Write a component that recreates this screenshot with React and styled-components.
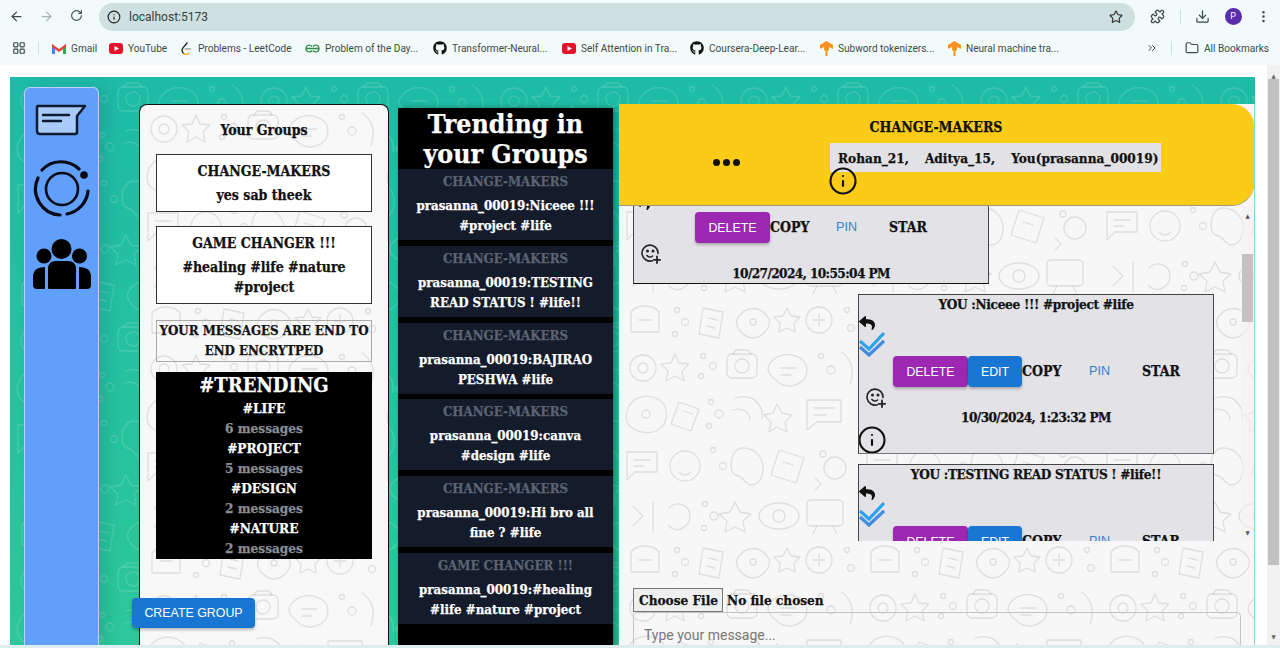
import styled, { createGlobalStyle } from "styled-components";
import {
  ArrowLeft,
  ArrowRight,
  RotateCw,
  Info,
  Star,
  Puzzle,
  Download,
  EllipsisVertical,
  LayoutGrid,
  Folder,
  ChevronsRight,
} from "lucide-react";
import { FaReply, FaGithub } from "react-icons/fa";

const doodle = (stroke) => {
  const svg = `<svg xmlns='http://www.w3.org/2000/svg' width='240' height='240' fill='none' stroke='${stroke}' stroke-width='1.3' stroke-linecap='round' stroke-linejoin='round'>
<circle cx='24' cy='24' r='13'/><circle cx='24' cy='24' r='5'/><path d='M56 10l4 9 10 1-7 7 2 10-9-5-9 5 2-10-7-7 10-1z'/>
<circle cx='84' cy='12' r='2.500'/><circle cx='94' cy='22' r='3.500'/><circle cx='82' cy='32' r='2.500'/>
<rect x='108' y='10' width='30' height='24' rx='5'/><circle cx='123' cy='22' r='7'/><path d='M114 10l3-4h12l3 4'/>
<path d='M154 16c12-10 34-5 34 10s-19 20-29 12-14-14-5-22z'/><path d='M162 24h15M162 31h10'/>
<circle cx='202' cy='12' r='2.500'/><circle cx='212' cy='26' r='4'/><path d='M222 8c10 6 14 18 9 32'/>
<path d='M10 62c8-15 34-12 37 4s-10 25-24 22-20-12-13-26z'/><circle cx='27' cy='70' r='4'/>
<path d='M60 58l20 7-8 22-20-7zM65 67l9 3'/><circle cx='92' cy='58' r='2.500'/><circle cx='100' cy='70' r='4'/><circle cx='90' cy='82' r='2.500'/>
<path d='M116 54c16-5 29 5 27 21M114 66c9-3 17 2 17 10'/><path d='M158 60l5 9 10 2-7 7 2 10-10-5-8 5 2-10-7-7 9-2z'/>
<path d='M188 56h34v22h-24l-10 8z'/><path d='M195 64h20M195 71h12'/>
<path d='M8 108h30v20H16l-8 8z'/><path d='M15 116h16M15 122h10'/>
<circle cx='66' cy='122' r='15'/><path d='M60 118h.1M72 118h.1M60 128c4 4 8 4 12 0'/><circle cx='94' cy='106' r='2.500'/><circle cx='104' cy='122' r='3.500'/>
<path d='M124 104c12 0 20 9 20 20s-5 17-12 17-7-9-15-10-7-27 7-27z'/><path d='M160 106l25 8-8 25-25-8z'/><path d='M164 118l10 3'/>
<circle cx='204' cy='110' r='3'/><circle cx='216' cy='124' r='11'/><path d='M210 122h.1M222 122h.1'/><path d='M196 134l6 6-6 6'/>
<path d='M14 162l10 10-10 10M34 158v30M50 164c8-8 21-3 21 8s-13 18-21 10'/><circle cx='86' cy='160' r='2.500'/><circle cx='95' cy='172' r='4'/><circle cx='85' cy='184' r='2.500'/>
<path d='M116 158l5 10 11 2-8 7 2 11-10-5-10 5 2-11-8-7 11-2z'/><ellipse cx='160' cy='172' rx='20' ry='13'/><circle cx='160' cy='172' r='6'/>
<path d='M192 156h28a4 4 0 0 1 4 4v18a4 4 0 0 1-4 4h-28a4 4 0 0 1-4-4v-18a4 4 0 0 1 4-4z'/><path d='M198 182l-4 8M214 182l4 8'/>
<path d='M12 208c6-8 22-8 28 0v20H12z'/><path d='M20 216h12'/><circle cx='58' cy='206' r='2.500'/><circle cx='66' cy='218' r='3.500'/><circle cx='56' cy='230' r='2.500'/>
<path d='M84 204l20 4-4 26-20-4zM90 214l8 2M88 222l8 2'/><path d='M120 212c8-10 20-10 28 0s-6 22-14 22-22-12-14-22z'/><circle cx='134' cy='218' r='3'/>
<path d='M168 204l4 8 9 1-6 6 1 9-8-4-8 4 1-9-6-6 9-1z'/><circle cx='200' cy='216' r='13'/><path d='M194 216h12M200 210v12'/><circle cx='228' cy='206' r='2.500'/><circle cx='232' cy='224' r='3.500'/>
</svg>`;
  return `url("data:image/svg+xml,${encodeURIComponent(svg.replace(/\n/g, ""))}")`;
};

const slab = `"DejaVu Serif Condensed", "DejaVu Serif", serif`;

const GlobalStyle = createGlobalStyle`
  html, body {
    margin: 0;
    padding: 0;
    height: 648px;
    overflow: hidden;
    background: #fff;
  }
  * {
    box-sizing: border-box;
  }
`;

const Window = styled.div`
  width: 1280px;
  height: 648px;
  display: flex;
  flex-direction: column;
  overflow: hidden;
  font-family: ${slab};
  font-weight: 700;
  -webkit-text-stroke: 0.25px currentColor;
`;

const Toolbar = styled.div`
  height: 33px;
  flex: none;
  display: flex;
  align-items: center;
  background: #f2fbf9;
  color: #3c4a4a;
  -webkit-text-stroke: 0;
`;

const NavButton = styled.div`
  width: 30px;
  display: flex;
  justify-content: center;
  color: ${(p) => (p.$off ? "#a9b5b5" : "#3c4a4a")};
`;

const NavGroup = styled.div`
  display: flex;
  width: 99px;
  padding-left: 1px;
`;

const Omnibox = styled.div`
  width: 1036px;
  height: 28px;
  border-radius: 14px;
  background: #cfe0e0;
  display: flex;
  align-items: center;
  padding: 0 12px 0 8px;
  gap: 8px;
  font: 400 12px "Roboto", sans-serif;
  color: #333f3f;
`;

const Address = styled.span`
  flex: 1;
`;

const ToolIcons = styled.div`
  flex: 1;
  display: flex;
  align-items: center;
  justify-content: space-between;
  padding: 0 9px 0 15px;
`;

const Divider = styled.span`
  width: 1px;
  height: 14px;
  flex: none;
  background: #bfe6e6;
  margin: ${(p) => p.$margin || 0};
`;

const Avatar = styled.span`
  width: 17px;
  height: 17px;
  border-radius: 50%;
  background: #5a2db0;
  color: #fff;
  font: 400 9px/17px "Roboto", sans-serif;
  text-align: center;
`;

const BookmarkBar = styled.div`
  height: 32px;
  flex: none;
  display: flex;
  align-items: center;
  background: #f2fbf9;
  padding: 0 11px 2px 12px;
  font: 400 10.1px "Roboto", sans-serif;
  color: #3f4a4a;
  -webkit-text-stroke: 0;
`;

const Bookmark = styled.span`
  display: flex;
  flex: none;
  align-items: center;
  gap: 5px;
  white-space: nowrap;
  width: ${(p) => (p.$w ? `${p.$w}px` : "auto")};
  svg {
    flex: none;
  }
`;

const BarSpacer = styled.span`
  flex: 1;
`;

const Page = styled.div`
  flex: 1;
  min-height: 0;
  display: flex;
  padding-top: 12px;
  background: #fff;
`;

const Stage = styled.main`
  width: 1245px;
  margin-left: 10px;
  height: 568px;
  background-color: #22bfa0;
  background-image: ${doodle("rgba(255,255,255,0.15)")},
    linear-gradient(#1ebba6, #2cc79a);
  display: flex;
  align-items: flex-start;
  padding-left: 14px;
  position: relative;
`;

const Rail = styled.nav`
  width: 75px;
  height: 558px;
  margin-top: 10px;
  flex: none;
  background: #60a0fb;
  border: 1px solid #b9d4fb;
  border-bottom: 0;
  border-radius: 6px 6px 0 0;
  display: flex;
  flex-direction: column;
  align-items: center;
  box-shadow: 8px 0 14px rgba(0, 60, 80, 0.14);
`;

const RailIcon = styled.div`
  display: flex;
  margin-top: ${(p) => p.$top}px;
`;

const GroupsPanel = styled.aside`
  width: 250px;
  height: 541px;
  margin: 27px 0 0 40px;
  flex: none;
  background-color: #f8f8f8;
  background-image: ${doodle("rgba(120,120,120,0.2)")};
  border: 1px solid #111;
  border-bottom: 0;
  border-radius: 8px 8px 0 0;
  padding: 0 16px;
  display: flex;
  flex-direction: column;
  color: #111;
`;

const PanelTitle = styled.h2`
  margin: 16px 0 15px;
  font-size: 14px;
  line-height: 18px;
  text-align: center;
`;

const GroupCard = styled.div`
  background: #fff;
  border: 1px solid #333;
  padding: 6px 4px;
  margin-bottom: 14px;
  text-align: center;
  font-size: 14px;
  line-height: 20px;
`;

const GroupName = styled.div`
  margin-bottom: 4px;
`;

const EncryptNote = styled.div`
  border: 1px solid #aaa;
  margin: 2px 0 10px;
  text-align: center;
  font-size: 13.2px;
  line-height: 20px;
`;

const TrendBox = styled.section`
  background: #000;
  height: 187px;
  flex: none;
  text-align: center;
  color: #fff;
  overflow: hidden;
`;

const TrendTitle = styled.div`
  font-size: 20px;
  line-height: 26px;
`;

const TrendTag = styled.div`
  font-size: 13.5px;
  line-height: 20px;
  color: ${(p) => (p.$muted ? "#8a8d93" : "#fff")};
`;

const MuiButton = styled.button`
  border: 0;
  border-radius: 4px;
  height: 31px;
  width: ${(p) => p.$w}px;
  flex: none;
  padding: 0;
  font: 400 12.4px "Liberation Sans", sans-serif;
  -webkit-text-stroke: 0;
  color: #fff;
  background: ${(p) => p.$bg || "#1976d2"};
  box-shadow: 0 2px 3px rgba(0, 0, 0, 0.25);
  white-space: nowrap;
`;

const CreateButton = styled(MuiButton)`
  height: 30px;
  margin: 39px 0 0 -24px;
`;

const TrendColumn = styled.section`
  width: 215px;
  height: 540px;
  margin: 31px 0 0 9px;
  flex: none;
  background: #000;
  color: #fff;
  box-shadow: 3px 0 6px rgba(0, 0, 0, 0.35);
  overflow: hidden;
`;

const ColumnTitle = styled.h1`
  margin: 0;
  height: 61px;
  padding: 1px 20px 0;
  font-size: 26.5px;
  line-height: 30px;
  text-align: center;
`;

const TrendCard = styled.article`
  background: #141b2b;
  height: 71px;
  margin-bottom: 5.8px;
  padding: 0 14px;
  text-align: center;
  font-size: 13.2px;
  line-height: 20px;
`;

const CardGroup = styled.div`
  color: #5b6372;
  line-height: 26px;
  margin-bottom: 1px;
`;

const ChatColumn = styled.section`
  width: 636px;
  height: 541px;
  margin: 27px 0 0 6px;
  flex: none;
  display: flex;
  flex-direction: column;
  background-color: #f7f7f7;
  background-image: ${doodle("rgba(120,120,120,0.2)")};
  border-right: 1px solid #7fe0b8;
`;

const ChatHeader = styled.header`
  height: 102px;
  flex: none;
  background: #fbcc17;
  border-radius: 0 22px 22px 0;
  border-bottom: 1px solid #9a9a80;
  display: flex;
  color: #111;
  position: relative;
  z-index: 1;
`;

const HeaderDots = styled.div`
  width: 211px;
  padding: 55px 0 0 94px;
  display: flex;
  gap: 3px;
`;

const Dot = styled.span`
  width: 7px;
  height: 7px;
  border-radius: 50%;
  background: #111;
`;

const HeaderInfo = styled.div`
  display: flex;
  flex-direction: column;
  align-items: flex-start;
`;

const HeaderName = styled.div`
  width: 212px;
  margin-top: 14px;
  height: 25px;
  font-size: 14px;
  line-height: 18px;
  text-align: center;
`;

const MemberList = styled.div`
  display: flex;
  gap: 16px;
  height: 29px;
  align-items: center;
  padding: 0 8px;
  width: 331px;
  background: #e2e2e6;
  font-size: 13.5px;
`;

const HeaderInfoIcon = styled(Info)`
  flex: none;
  margin: -6px 0 0 -2px;
`;

const MessageArea = styled.div`
  height: 335px;
  flex: none;
  position: relative;
  overflow: hidden;
`;

const MessageTrack = styled.div`
  margin-top: -82px;
  padding: 0 40px 0 14px;
  display: flex;
  flex-direction: column;
  gap: 10px;
`;

const Bubble = styled.div`
  width: 356px;
  flex: none;
  height: 160px;
  align-self: ${(p) => (p.$mine ? "flex-end" : "flex-start")};
  background: #e2e2e7;
  border: 1px solid #444;
  border-bottom-color: ${(p) => (p.$mine ? "#777" : "#111")};
  color: #111;
  font-size: 13.5px;
  display: flex;
  flex-direction: column;
  overflow: hidden;
`;

const BubbleText = styled.div`
  text-align: center;
  line-height: 18px;
  letter-spacing: -0.3px;
  flex: none;
  height: ${(p) => p.$h}px;
`;

const IconStack = styled.div`
  display: flex;
  flex-direction: column;
  flex: none;
  height: ${(p) => p.$h}px;
  padding-top: 2px;
  svg {
    flex: none;
  }
`;

const ActionRow = styled.div`
  display: flex;
  align-items: center;
  height: 31px;
  flex: none;
  padding-left: ${(p) => (p.$mine ? 34 : 61)}px;
  position: relative;
`;

const ActionLabel = styled.span`
  width: ${(p) => p.$w}px;
  padding-bottom: 2px;
  font-size: 14px;
`;

const PinLabel = styled.span`
  width: 53px;
  padding-bottom: 1px;
  font: 400 12.6px "Liberation Sans", sans-serif;
  -webkit-text-stroke: 0;
  color: #3a80cc;
`;

const ReactRow = styled.div`
  display: flex;
  height: 21px;
  flex: none;
  align-items: center;
  padding-left: 7px;
`;

const Stamp = styled.div`
  text-align: center;
  line-height: 18px;
  letter-spacing: -0.6px;
  flex: none;
`;

const BubbleInfo = styled(Info)`
  flex: none;
  margin: -1px 0 0 -2px;
`;

const ScrollTrack = styled.div`
  position: absolute;
  top: 0;
  right: 0;
  bottom: 0;
  width: 13px;
  background: rgba(241, 241, 241, 0.6);
  display: flex;
  flex-direction: column;
  align-items: center;
  justify-content: space-between;
  padding: 7px 0 5px;
  color: #555;
  font-size: 6px;
  line-height: 6px;
  -webkit-text-stroke: 0;
`;

const ScrollThumb = styled.div`
  position: absolute;
  top: 48px;
  left: 1px;
  width: 11px;
  height: 68px;
  background: #c2c2c2;
`;

const Composer = styled.form`
  padding: 47px 14px 0;
  flex: 1;
  min-height: 0;
  overflow: hidden;
`;

const FileRow = styled.div`
  display: flex;
  align-items: center;
  gap: 4px;
  color: #111;
  font-size: 13.5px;
`;

const FileButton = styled.span`
  height: 24px;
  line-height: 22px;
  padding: 0 4px 0 5px;
  border: 1px solid #777;
  background: #efefef;
`;

const MessageInput = styled.div`
  width: 608px;
  height: 40px;
  border: 1px solid #c4c4c4;
  border-radius: 4px 4px 0 0;
  padding: 14px 10px 0;
  font: 400 14px "Roboto", sans-serif;
  -webkit-text-stroke: 0;
  color: #777;
`;

const Gutter = styled.div`
  width: 12px;
`;

const PageScroll = styled.div`
  width: 13px;
  margin-top: -12px;
  height: 580px;
  background: #f1f1f1;
  position: relative;
  color: #666;
  font-size: 6px;
  line-height: 6px;
  -webkit-text-stroke: 0;
  display: flex;
  flex-direction: column;
  align-items: center;
  justify-content: space-between;
  padding: 8px 0 5px;
`;

const PageThumb = styled.div`
  position: absolute;
  top: 14px;
  left: 1px;
  width: 11px;
  height: 486px;
  background: #c1c1c1;
`;

const BottomEdge = styled.div`
  position: absolute;
  left: 0;
  right: 0;
  bottom: 0;
  height: 3px;
  background: #dcefee;
`;

const ChatGlyph = () => (
  <svg width="54" height="36" viewBox="0 0 54 36">
    <path
      d="M3 5 H50 L42 15 V31 Q42 33 40 33 H5 Q2 33 2 30 V6 Q2 5 3 5 Z"
      fill="#a9cbfb"
      stroke="#0d1b33"
      strokeWidth="2.5"
      strokeLinejoin="round"
    />
    <path d="M8 14 H34 M8 20 H26" stroke="#0d1b33" strokeWidth="2.5" strokeLinecap="round" />
  </svg>
);

const StatusGlyph = () => (
  <svg width="58" height="58" viewBox="0 0 58 58" fill="none" stroke="#050a14" strokeLinecap="round">
    <circle cx="29" cy="29" r="16" strokeWidth="2.600" />
    <path d="M9 10 A26 26 0 0 1 46 9" strokeWidth="3.200" />
    <path d="M5 18 A26 26 0 0 0 27 55" strokeWidth="3.200" />
    <path d="M34 54 A26 26 0 0 0 55 31" strokeWidth="3.200" />
    <circle cx="51" cy="15" r="5" fill="#60a0fb" stroke="none" />
    <circle cx="51" cy="15" r="3.800" fill="#050a14" stroke="none" />
  </svg>
);

const GroupGlyph = () => (
  <svg width="60" height="50" viewBox="0 0 60 50" fill="#000">
    <circle cx="29.500" cy="10" r="10" />
    <circle cx="12" cy="17" r="7.500" />
    <circle cx="47.500" cy="17" r="7.500" />
    <path d="M16 30 Q16 22 24 22 H36 Q44 22 44 30 V49 Q44 50 43 50 H17 Q16 50 16 49 Z" />
    <path d="M13 28 Q1 28 1 38 V46 Q1 50 5 50 H13 Z" />
    <path d="M47 28 Q59 28 59 38 V46 Q59 50 55 50 H47 Z" />
  </svg>
);

const DoubleCheck = () => (
  <svg width="26" height="26" viewBox="0 0 26 26" fill="none" strokeWidth="3.2">
    <path d="M1 10 L10 18 L25 2" stroke="#2aa4f0" />
    <path d="M1 16 L10 24 L25 10" stroke="#3f8ce0" />
  </svg>
);

const AddReaction = () => (
  <svg width="20" height="20" viewBox="0 0 20 20" fill="none" stroke="#222" strokeWidth="1.600" strokeLinecap="round">
    <path d="M11.500 16.700 A8 8 0 1 1 17 9.500" />
    <path d="M6 11.500 C7.500 13.500 10 13.500 11.500 12" />
    <circle cx="6.500" cy="7" r="0.700" fill="#222" />
    <circle cx="12" cy="7" r="0.700" fill="#222" />
    <path d="M16 12.500 V19 M12.800 15.800 H19.200" strokeWidth="1.800" />
  </svg>
);

const Gmail = () => (
  <svg width="14" height="11" viewBox="0 0 14 11">
    <path d="M0 1v10h3V4z" fill="#4285f4" />
    <path d="M14 1v10h-3V4z" fill="#34a853" />
    <path d="M0 1l7 5 7-5v3L7 9 0 4z" fill="#ea4335" />
  </svg>
);

const YouTube = () => (
  <svg width="14" height="11" viewBox="0 0 14 11">
    <rect width="14" height="11" rx="3" fill="#e8112d" />
    <path d="M5.500 3v5L10 5.500z" fill="#fff" />
  </svg>
);

const LeetCode = () => (
  <svg width="13" height="15" viewBox="0 0 14 15" fill="none" strokeWidth="1.400">
    <path d="M8 1 L3 7 Q1 10 4 13" stroke="#222" />
    <path d="M5 8 H12" stroke="#999" />
    <path d="M4 13 Q7 15 10 12" stroke="#f0a020" />
  </svg>
);

const Gfg = () => (
  <svg width="15" height="9" viewBox="0 0 15 9" fill="none" stroke="#2f8d46" strokeWidth="1.300">
    <path d="M1 4.500h13M7 2.500C5 0 1 1 1 4.500S5 9 7 6.500M8 2.500C10 0 14 1 14 4.500S10 9 8 6.500" />
  </svg>
);

const Flame = () => (
  <svg width="13" height="15" viewBox="0 0 13 15">
    <path d="M6.500 0 L13 4 V8 L9 6 V9 L7.500 10 V15 H5.500 V10 L4 9 V6 L0 8 V4 Z" fill="#f7931e" />
  </svg>
);

const Message = ({ mine, textHeight, stackHeight, text, stamp, showInfo }) => (
  <Bubble $mine={mine}>
    <BubbleText $h={textHeight}>{text}</BubbleText>
    <IconStack $h={stackHeight}>
      <FaReply size={16} color="#111" />
      {mine && <DoubleCheck />}
    </IconStack>
    <ActionRow $mine={mine}>
      <MuiButton $w={75} $bg="#9c27b0">
        DELETE
      </MuiButton>
      {mine && <MuiButton $w={54}>EDIT</MuiButton>}
      <ActionLabel $w={mine ? 67 : 66}>COPY</ActionLabel>
      <PinLabel>PIN</PinLabel>
      <ActionLabel $w={60}>STAR</ActionLabel>
    </ActionRow>
    <ReactRow>
      <AddReaction />
    </ReactRow>
    {stamp && <Stamp>{stamp}</Stamp>}
    {showInfo && <BubbleInfo size={30} strokeWidth={1.7} color="#111" />}
  </Bubble>
);

const trending = [
  ["CHANGE-MAKERS", "prasanna_00019:Niceee !!! #project #life"],
  ["CHANGE-MAKERS", "prasanna_00019:TESTING READ STATUS ! #life!!"],
  ["CHANGE-MAKERS", "prasanna_00019:BAJIRAO PESHWA #life"],
  ["CHANGE-MAKERS", "prasanna_00019:canva #design #life"],
  ["CHANGE-MAKERS", "prasanna_00019:Hi bro all fine ? #life"],
  ["GAME CHANGER !!!", "prasanna_00019:#healing #life #nature #project"],
];

const tags = [
  ["#LIFE", "6 messages"],
  ["#PROJECT", "5 messages"],
  ["#DESIGN", "2 messages"],
  ["#NATURE", "2 messages"],
];

export default function App() {
  return (
    <Window>
      <GlobalStyle />
      <Toolbar>
        <NavGroup>
          <NavButton>
            <ArrowLeft size={15} />
          </NavButton>
          <NavButton $off>
            <ArrowRight size={15} />
          </NavButton>
          <NavButton>
            <RotateCw size={13} />
          </NavButton>
        </NavGroup>
        <Omnibox>
          <Info size={14} color="#222" />
          <Address>localhost:5173</Address>
          <Star size={14} color="#333" />
        </Omnibox>
        <ToolIcons>
          <Puzzle size={15} />
          <Divider />
          <Download size={15} />
          <Avatar>P</Avatar>
          <EllipsisVertical size={15} />
        </ToolIcons>
      </Toolbar>
      <BookmarkBar>
        <LayoutGrid size={14} />
        <Divider $margin="0 13px 0 12px" />
        <Bookmark $w={57}>
          <Gmail />
          Gmail
        </Bookmark>
        <Bookmark $w={71}>
          <YouTube />
          YouTube
        </Bookmark>
        <Bookmark $w={125}>
          <LeetCode />
          Problems - LeetCode
        </Bookmark>
        <Bookmark $w={128}>
          <Gfg />
          Problem of the Day...
        </Bookmark>
        <Bookmark $w={129}>
          <FaGithub size={14} color="#111" />
          Transformer-Neural...
        </Bookmark>
        <Bookmark $w={128}>
          <YouTube />
          Self Attention in Tra...
        </Bookmark>
        <Bookmark $w={130}>
          <FaGithub size={14} color="#111" />
          Coursera-Deep-Lear...
        </Bookmark>
        <Bookmark $w={128}>
          <Flame />
          Subword tokenizers...
        </Bookmark>
        <Bookmark>
          <Flame />
          Neural machine tra...
        </Bookmark>
        <BarSpacer />
        <ChevronsRight size={12} />
        <Divider $margin="0 13px 0 13px" />
        <Bookmark>
          <Folder size={14} />
          All Bookmarks
        </Bookmark>
      </BookmarkBar>
      <Page>
        <Stage>
          <Rail>
            <RailIcon $top={13}>
              <ChatGlyph />
            </RailIcon>
            <RailIcon $top={23}>
              <StatusGlyph />
            </RailIcon>
            <RailIcon $top={21}>
              <GroupGlyph />
            </RailIcon>
          </Rail>
          <GroupsPanel>
            <PanelTitle>Your Groups</PanelTitle>
            <GroupCard>
              <GroupName>CHANGE-MAKERS</GroupName>
              yes sab theek
            </GroupCard>
            <GroupCard>
              <GroupName>GAME CHANGER !!!</GroupName>
              #healing #life #nature #project
            </GroupCard>
            <EncryptNote>YOUR MESSAGES ARE END TO END ENCRYTPED</EncryptNote>
            <TrendBox>
              <TrendTitle>#TRENDING</TrendTitle>
              {tags.map(([tag, count]) => (
                <div key={tag}>
                  <TrendTag>{tag}</TrendTag>
                  <TrendTag $muted>{count}</TrendTag>
                </div>
              ))}
            </TrendBox>
            <CreateButton $w={123}>CREATE GROUP</CreateButton>
          </GroupsPanel>
          <TrendColumn>
            <ColumnTitle>Trending in your Groups</ColumnTitle>
            {trending.map(([group, text]) => (
              <TrendCard key={text}>
                <CardGroup>{group}</CardGroup>
                {text}
              </TrendCard>
            ))}
          </TrendColumn>
          <ChatColumn>
            <ChatHeader>
              <HeaderDots>
                <Dot />
                <Dot />
                <Dot />
              </HeaderDots>
              <HeaderInfo>
                <HeaderName>CHANGE-MAKERS</HeaderName>
                <MemberList>
                  <span>Rohan_21,</span>
                  <span>Aditya_15,</span>
                  <span>You(prasanna_00019)</span>
                </MemberList>
                <HeaderInfoIcon size={30} strokeWidth={1.7} color="#111" />
              </HeaderInfo>
            </ChatHeader>
            <MessageArea>
              <MessageTrack>
                <Message
                  textHeight={68}
                  stackHeight={19}
                  stamp="10/27/2024, 10:55:04 PM"
                />
                <Message
                  mine
                  textHeight={18}
                  stackHeight={43}
                  text="YOU :Niceee !!! #project #life"
                  stamp="10/30/2024, 1:23:32 PM"
                  showInfo
                />
                <Message
                  mine
                  textHeight={18}
                  stackHeight={43}
                  text="YOU :TESTING READ STATUS ! #life!!"
                />
              </MessageTrack>
              <ScrollTrack>
                <span>▲</span>
                <ScrollThumb />
                <span>▼</span>
              </ScrollTrack>
            </MessageArea>
            <Composer>
              <FileRow>
                <FileButton>Choose File</FileButton>
                No file chosen
              </FileRow>
              <MessageInput>Type your message...</MessageInput>
            </Composer>
          </ChatColumn>
        </Stage>
        <Gutter />
        <PageScroll>
          <span>▲</span>
          <PageThumb />
          <span>▼</span>
        </PageScroll>
      </Page>
      <BottomEdge />
    </Window>
  );
}
